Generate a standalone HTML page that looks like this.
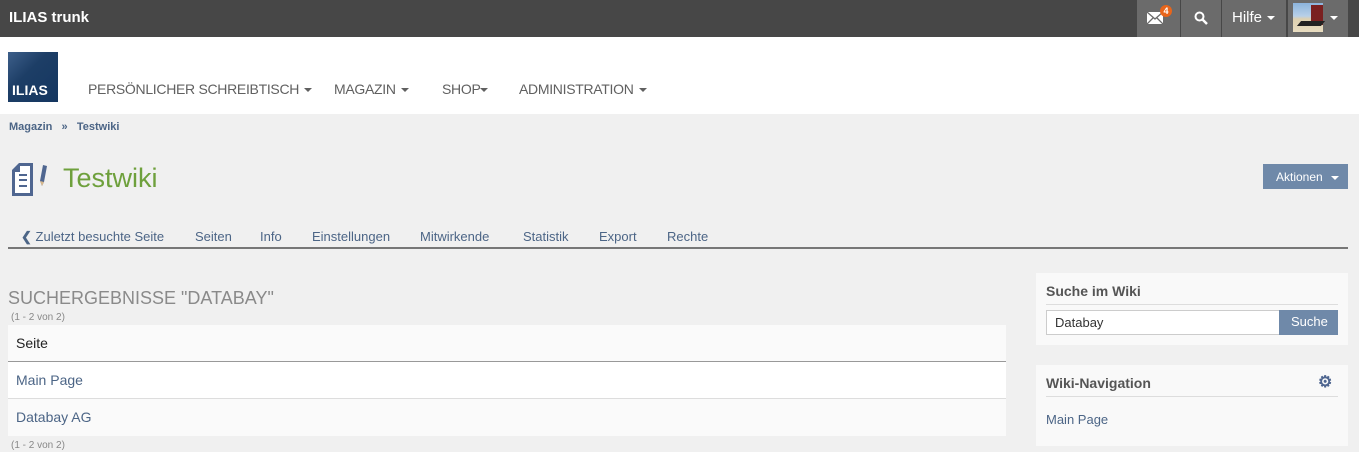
<!DOCTYPE html>
<html><head><meta charset="utf-8"><style>
*{margin:0;padding:0;box-sizing:border-box}
body{width:1359px;height:452px;overflow:hidden;background:#f0f0f0;font-family:"Liberation Sans",sans-serif;position:relative}
.a{position:absolute;white-space:nowrap}
.top{left:0;top:0;width:1359px;height:37px;background:#474747}
.tb{top:0;height:37px;background:#6b6b6b;color:#fff}
.hdr{left:0;top:37px;width:1359px;height:77px;background:#fff}
.nav{top:81px;font-size:14px;color:#606060;letter-spacing:-0.3px}
.car{display:inline-block;border-left:4px solid transparent;border-right:4px solid transparent;border-top:4px solid currentColor;vertical-align:middle;margin-left:5px}
.tab{top:229px;font-size:13px;color:#4c6586}
.lnk{color:#4c6586}
.row{left:8px;width:998px;height:37px;background:#fafafa;font-size:14px;padding:10px 8px}
.pnl{left:1036px;width:312px;background:#f9f9f9}
</style></head><body>
<div class="a top"></div>
<div class="a" style="left:9px;top:9px;font-size:15px;font-weight:bold;color:#fff">ILIAS trunk</div>
<div class="a tb" style="left:1137px;width:43px">
<svg style="position:absolute;left:10px;top:12px" width="16" height="12" viewBox="0 0 16 12"><rect width="16" height="12" fill="#fff"/><path d="M0 0L8 7L16 0M0 12L6 6M16 12L10 6" stroke="#6b6b6b" stroke-width="1.3" fill="none"/></svg>
<div class="a" style="left:23px;top:5px;width:12px;height:12px;border-radius:6px;background:#e8651b;font-size:9px;font-weight:bold;text-align:center;line-height:12px">4</div></div>
<div class="a tb" style="left:1181px;width:40px"><svg style="position:absolute;left:13px;top:11px" width="14" height="14"><circle cx="5.5" cy="5.5" r="4" stroke="#fff" stroke-width="2" fill="none"/><path d="M8.5 8.5L13 13" stroke="#fff" stroke-width="2.5"/></svg></div>
<div class="a tb" style="left:1222px;width:64px;font-size:15px;padding:9px 0 0 10px">Hilfe<span class="car"></span></div>
<div class="a tb" style="left:1288px;width:60px"><div class="a" style="left:5px;top:3px;width:30px;height:29px;background:linear-gradient(180deg,#8cb4dc 0,#b8d0e8 45%,#ddd0b0 55%,#e8dcc0 100%)"><div class="a" style="left:18px;top:2px;width:12px;height:20px;background:#7a2020"></div><div class="a" style="left:6px;top:18px;width:24px;height:5px;background:#222;transform:skewX(-40deg)"></div></div><span class="car" style="position:absolute;left:37px;top:16px;color:#fff"></span></div>
<div class="a hdr"></div>
<div class="a" style="left:8px;top:52px;width:50px;height:50px;background:linear-gradient(135deg,#3d5f8a 0,#1d3e66 40%,#143660 100%);color:#fff;font-weight:bold;font-size:14px;padding:30px 0 0 4px">ILIAS</div>
<div class="a nav" style="left:88px">PERSÖNLICHER SCHREIBTISCH<span class="car"></span></div>
<div class="a nav" style="left:334px">MAGAZIN<span class="car"></span></div>
<div class="a nav" style="left:442px">SHOP<span class="car" style="margin-left:0"></span></div>
<div class="a nav" style="left:519px">ADMINISTRATION<span class="car"></span></div>
<div class="a" style="left:9px;top:121px;font-size:11px;font-weight:bold;color:#4c6586">Magazin &nbsp;&nbsp;»&nbsp;&nbsp; Testwiki</div>
<svg class="a" style="left:11px;top:162px" width="40" height="38" viewBox="0 0 40 38"><path d="M8 1H22V34H1V8Z" fill="#4f6690"/><path d="M9 4H19V31H4V10H9Z" fill="#fff"/><path d="M8 13H16M8 18H16M8 24H16" stroke="#4f6690" stroke-width="2"/><path d="M32 3L36 4L33 20L31 24L29 19Z" fill="#4f6690"/><path d="M29 19L31 24L33 20Z" fill="#d8b88c"/></svg>
<div class="a" style="left:63px;top:163px;font-size:27px;color:#6ea03c">Testwiki</div>
<div class="a" style="left:1263px;top:164px;width:85px;height:25px;background:#6f89a9;color:#fff;font-size:12px;padding:6px 0 0 13px">Aktionen<span class="car" style="margin-left:8px"></span></div>
<div class="a tab" style="left:21px"><span style="font-weight:bold">&#10094;</span> Zuletzt besuchte Seite</div>
<div class="a tab" style="left:195px">Seiten</div>
<div class="a tab" style="left:260px">Info</div>
<div class="a tab" style="left:312px">Einstellungen</div>
<div class="a tab" style="left:420px">Mitwirkende</div>
<div class="a tab" style="left:523px">Statistik</div>
<div class="a tab" style="left:599px">Export</div>
<div class="a tab" style="left:667px">Rechte</div>
<div class="a" style="left:8px;top:247px;width:1340px;height:2px;background:#777"></div>
<div class="a" style="left:8px;top:288px;font-size:18px;color:#8a8a8a">SUCHERGEBNISSE "DATABAY"</div>
<div class="a" style="left:11px;top:312px;font-size:10px;color:#888">(1 - 2 von 2)</div>
<div class="a row" style="top:325px;color:#222;border-bottom:1px solid #999">Seite</div>
<div class="a row lnk" style="top:362px;background:#fff;border-bottom:1px solid #ddd">Main Page</div>
<div class="a row lnk" style="top:399px">Databay AG</div>
<div class="a" style="left:11px;top:440px;font-size:10px;color:#888">(1 - 2 von 2)</div>
<div class="a pnl" style="top:273px;height:72px"></div>
<div class="a" style="left:1046px;top:283px;font-size:14px;font-weight:bold;color:#555">Suche im Wiki</div>
<div class="a" style="left:1046px;top:304px;width:292px;height:1px;background:#ddd"></div>
<div class="a" style="left:1046px;top:310px;width:234px;height:25px;background:#fff;border:1px solid #ccc;font-size:13px;color:#333;padding:4px 0 0 8px">Databay</div>
<div class="a" style="left:1279px;top:310px;width:59px;height:25px;background:#6f89a9;color:#fff;font-size:13px;padding:4px 0 0 12px">Suche</div>
<div class="a pnl" style="top:365px;height:81px"></div>
<div class="a" style="left:1046px;top:375px;font-size:14px;font-weight:bold;color:#555">Wiki-Navigation</div>
<div class="a" style="left:1318px;top:372px;font-size:16px;font-weight:bold;color:#4f6690">&#9881;</div>
<div class="a" style="left:1046px;top:396px;width:292px;height:1px;background:#ddd"></div>
<div class="a lnk" style="left:1046px;top:412px;font-size:13px">Main Page</div>
</body></html>
